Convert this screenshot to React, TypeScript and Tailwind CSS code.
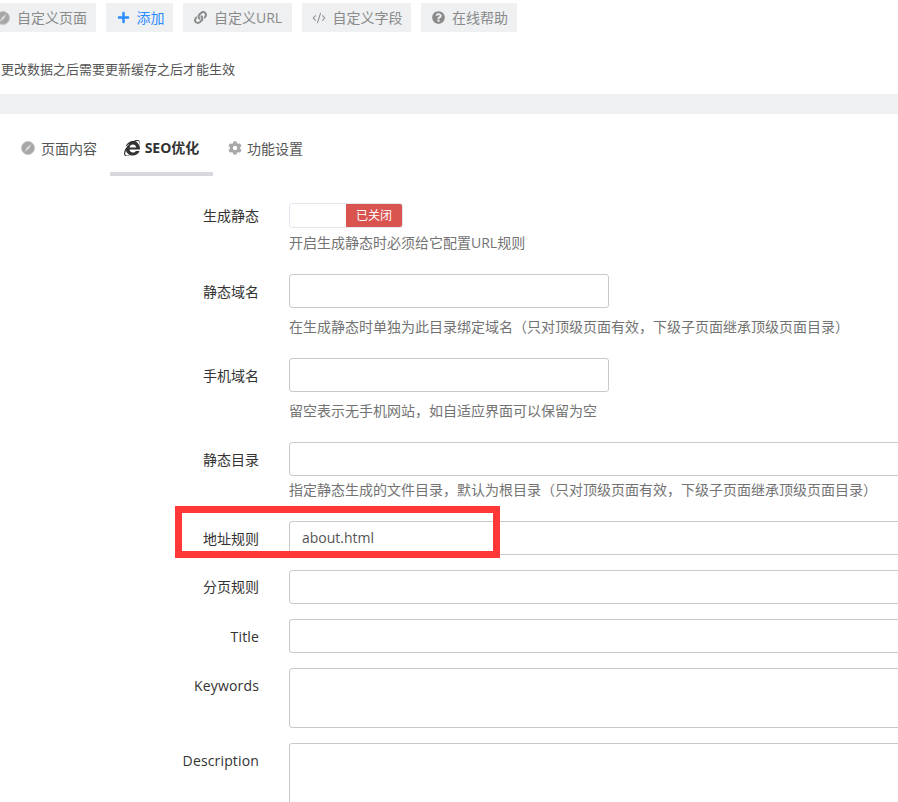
import React from "react";
import { FaCog, FaInternetExplorer, FaLink, FaPlus, FaQuestionCircle } from "react-icons/fa";
import { CodeXml } from "lucide-react";

const font = { fontFamily: '"Open Sans", "Noto Sans CJK SC", sans-serif' };

function CompassIcon() {
  return (
    <svg width="14" height="14" viewBox="0 0 14 14" className="shrink-0">
      <circle cx="7" cy="7" r="6.5" fill="#a6a6a6" stroke="#c4c4c4" />
      <path d="M10.5 3 L6 6.2 L3.5 11 L8 7.8 Z" fill="#dcdcdc" />
    </svg>
  );
}

function ToolButton({ icon, label, width, blue, className = "" }: { icon: React.ReactNode; label: string; width: string; blue?: boolean; className?: string }) {
  return (
    <a className={`flex h-[29px] items-center justify-center gap-[7px] whitespace-nowrap bg-[#eef0f2] text-[14px] ${width} ${className}`}>
      <span className={`text-[13px] ${blue ? "text-[#2b8cff]" : "text-[#8a8a8a]"}`}>{icon}</span>
      <span className={blue ? "text-[#2b8cff]" : "text-[#8a8a8a]"}>{label}</span>
    </a>
  );
}

function Row({ label, children, help, helpTop = "mt-[9px]", labelTop = "pt-[6px]", latin, last }: { label: string; children: React.ReactNode; help?: string; helpTop?: string; labelTop?: string; latin?: boolean; last?: boolean }) {
  return (
    <div className={`flex ${help ? "mb-[21px]" : last ? "" : "mb-[15px]"}`}>
      <label className={`w-[259px] shrink-0 ${labelTop} text-right text-[14px] leading-[24px] text-[#333] ${latin ? "tracking-[0.15px]" : ""}`}>{label}</label>
      <div className="ml-[30px] min-w-0 flex-1">
        {children}
        {help && <div className={`${helpTop} whitespace-nowrap text-[14px] leading-[20px] text-[#737373]`}>{help}</div>}
      </div>
    </div>
  );
}

const inputBase = "block h-[34px] rounded-[3px] border border-[#c9c9c9] bg-white px-3 text-[14px] text-[#555] outline-none";

export default function App() {
  return (
    <div className="relative h-[802px] w-[898px] overflow-hidden bg-white" style={font}>
      <div className="-ml-[4px] flex gap-[10px] pt-[3px]">
        <ToolButton icon={<CompassIcon />} label="自定义页面" width="w-[100px]" className="pr-[9px]" />
        <ToolButton icon={<FaPlus />} label="添加" width="w-[67px]" className="pl-[2px]" blue />
        <ToolButton icon={<FaLink />} label="自定义URL" width="w-[109px]" className="pl-[1px]" />
        <ToolButton icon={<CodeXml size={14} strokeWidth={1.75} />} label="自定义字段" width="w-[109px]" className="pl-[1px]" />
        <ToolButton icon={<FaQuestionCircle />} label="在线帮助" width="w-[96px]" className="pl-[2px]" />
      </div>

      <p className="mt-[27px] pl-[1px] text-[13px] leading-[20px] text-[#555]">更改数据之后需要更新缓存之后才能生效</p>

      <div className="mt-[15px] h-[20px] bg-[#eef0f2]" />

      <div className="mt-[2px] flex h-[60px] pl-[21px] text-[14px] text-[#555]">
        <div className="flex items-center gap-[6px] pr-[13px] pt-[4px]">
          <CompassIcon />
          <span>页面内容</span>
        </div>
        <div className="flex w-[103px] items-center justify-center gap-[5px] border-b-4 border-[#d8d8de] pt-[7px] font-bold text-[#333]">
          <FaInternetExplorer className="text-[16px]" />
          <span>SEO优化</span>
        </div>
        <div className="flex items-center gap-[5px] pl-[15px] pt-[4px]">
          <FaCog className="text-[14px] text-[#a8a8a8]" />
          <span>功能设置</span>
        </div>
      </div>

      <div className="mt-[27px]">
        <Row label="生成静态" help="开启生成静态时必须给它配置URL规则" helpTop="mt-[5px]" labelTop="pt-[1px]">
          <div className="flex h-[25px] w-[114px] overflow-hidden rounded-[3px] border border-[#e4e5ee]">
            <div className="flex-1 bg-white" />
            <div className="flex w-[56px] items-center justify-center bg-[#d9534f] text-[12px] text-white">已关闭</div>
          </div>
        </Row>
        <Row label="静态域名" help="在生成静态时单独为此目录绑定域名（只对顶级页面有效，下级子页面继承顶级页面目录）">
          <input className={`${inputBase} w-[320px]`} />
        </Row>
        <Row label="手机域名" help="留空表示无手机网站，如自适应界面可以保留为空">
          <input className={`${inputBase} w-[320px]`} />
        </Row>
        <Row label="静态目录" help="指定静态生成的文件目录，默认为根目录（只对顶级页面有效，下级子页面继承顶级页面目录）" helpTop="mt-[4px]">
          <input className={`${inputBase} w-[700px]`} />
        </Row>
        <Row label="地址规则">
          <input className={`${inputBase} w-[700px] pb-[1px]`} defaultValue="about.html" />
        </Row>
        <Row label="分页规则" labelTop="pt-[5px]">
          <input className={`${inputBase} w-[700px]`} />
        </Row>
        <Row label="Title" latin>
          <input className={`${inputBase} w-[700px]`} />
        </Row>
        <Row label="Keywords" latin>
          <textarea className={`${inputBase} !h-[60px] w-[700px] resize-none`} />
        </Row>
        <Row label="Description" latin last>
          <textarea className={`${inputBase} !h-[80px] w-[700px] resize-none`} />
        </Row>
      </div>

      <div className="pointer-events-none absolute left-[175px] top-[506px] h-[52px] w-[325px] border-[7px] border-[#ff3737]" />
    </div>
  );
}
